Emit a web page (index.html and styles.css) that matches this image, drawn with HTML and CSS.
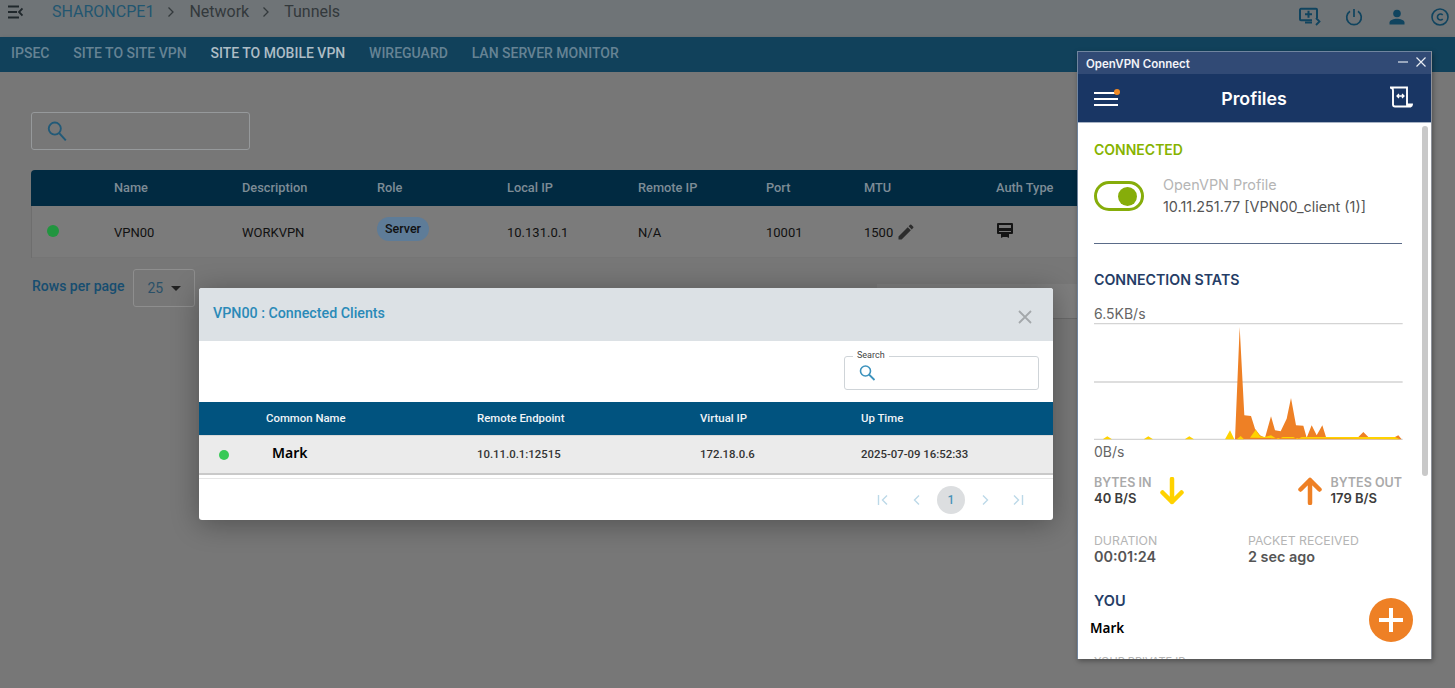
FILE: index.html
```html
<!DOCTYPE html>
<html lang="en">
<head>
<meta charset="utf-8">
<title>Tunnels</title>
<link rel="stylesheet" href="styles.css">
</head>
<body>
<div class="page">
  <header class="topbar">
    <svg class="menu-ic" width="15" height="14" viewBox="0 0 15 14"><path d="M0 1.500h11M0 7h9M0 12.500h11" stroke="#20282c" stroke-width="1.800" fill="none"/><path d="M14.500 3.500 11 7l3.500 3.500" stroke="#20282c" stroke-width="1.800" fill="none"/></svg>
    <nav class="crumbs">
      <span class="crumb-root">SHARONCPE1</span>
      <svg class="chev" width="8" height="12" viewBox="0 0 8 12"><path d="M1.500 1.500 6 6l-4.500 4.500" stroke="#33393c" stroke-width="1.300" fill="none"/></svg>
      <span>Network</span>
      <svg class="chev" width="8" height="12" viewBox="0 0 8 12"><path d="M1.500 1.500 6 6l-4.500 4.500" stroke="#33393c" stroke-width="1.300" fill="none"/></svg>
      <span>Tunnels</span>
    </nav>
    <div class="top-icons">
      <svg class="mon-ic" width="22" height="20" viewBox="0 0 22 20"><path d="M18 11V2.800a1 1 0 0 0-1-1H2a1 1 0 0 0-1 1v9.400a1 1 0 0 0 1 1h11" stroke="#10445f" stroke-width="2" fill="none"/><path d="M9.500 3.800v7M6 7.300h7M6 15.500h7" stroke="#10445f" stroke-width="2" fill="none"/><path d="m17 11 3.500 3.500L17 18" stroke="#10445f" stroke-width="1.800" fill="none"/></svg>
      <svg width="18" height="18" viewBox="0 0 18 18"><path d="M9 1v8" stroke="#10445f" stroke-width="1.700"/><path d="M5 3.300a7.300 7.300 0 1 0 8 0" stroke="#10445f" stroke-width="1.700" fill="none"/></svg>
      <svg width="16" height="16" viewBox="0 0 16 16"><circle cx="8" cy="4.500" r="3.800" fill="#10445f"/><path d="M0.500 15.500v-2c0-2.600 4.500-3.800 7.500-3.800s7.500 1.200 7.500 3.800v2z" fill="#10445f"/></svg>
      <svg width="18" height="18" viewBox="0 0 18 18"><circle cx="9" cy="9" r="8" stroke="#10445f" stroke-width="1.600" fill="none"/><path d="M11.700 7a3 3 0 1 0 0 4" stroke="#10445f" stroke-width="1.600" fill="none"/></svg>
    </div>
  </header>

  <nav class="tabs">
    <span class="tab">IPSEC</span>
    <span class="tab">SITE TO SITE VPN</span>
    <span class="tab tab-active">SITE TO MOBILE VPN</span>
    <span class="tab">WIREGUARD</span>
    <span class="tab">LAN SERVER MONITOR</span>
  </nav>

  <main class="content">
    <div class="search">
      <svg width="22" height="22" viewBox="0 0 20 20"><circle cx="8" cy="7.800" r="5.500" stroke="#225a78" stroke-width="1.700" fill="none"/><path d="m12 12 6 6.500" stroke="#225a78" stroke-width="1.800"/></svg>
    </div>

    <div class="table">
      <div class="thead">
        <span></span><span>Name</span><span>Description</span><span>Role</span><span>Local IP</span><span>Remote IP</span><span>Port</span><span>MTU</span><span>Auth Type</span>
      </div>
      <div class="trow">
        <span class="dot-cell"><i class="dot"></i></span>
        <span>VPN00</span>
        <span>WORKVPN</span>
        <span><b class="role">Server</b></span>
        <span>10.131.0.1</span>
        <span>N/A</span>
        <span>10001</span>
        <span class="mtu">1500
          <svg width="20" height="20" viewBox="0 0 24 24"><path fill="#2c2c2c" d="M3 17.250V21h3.750L17.810 9.940l-3.750-3.750L3 17.250zM20.710 7.040a1 1 0 0 0 0-1.410l-2.340-2.340a1 1 0 0 0-1.410 0l-1.830 1.830 3.750 3.750 1.830-1.830z"/></svg>
        </span>
        <span class="auth">
          <svg width="18" height="17" viewBox="0 0 18 17"><path d="M2 1h14a1 1 0 0 1 1 1v9a1 1 0 0 1-1 1h-3v4l-2-1h-4l-2 1v-4H2a1 1 0 0 1-1-1V2a1 1 0 0 1 1-1z" fill="#141414"/><path d="M3 3h12v3H3z" fill="#777"/><path d="M3 9h12v1H3z" fill="#777"/></svg>
        </span>
      </div>
    </div>

    <div class="rows">
      <span class="rows-label">Rows per page</span>
      <span class="rows-select">25 <i class="caret"></i></span>
    </div>
  </main>
</div>

<div class="ghost"></div>

<section class="modal">
  <div class="modal-head">
    <span class="modal-title">VPN00 : Connected Clients</span>
    <svg class="modal-x" width="14" height="14" viewBox="0 0 14 14"><path d="m1 1 12 12M13 1 1 13" stroke="#a4a8ab" stroke-width="1.800"/></svg>
  </div>
  <div class="modal-tools">
    <div class="m-search">
      <span class="m-search-label">Search</span>
      <svg width="18" height="18" viewBox="0 0 18 18"><circle cx="7.500" cy="7" r="5" stroke="#3d93bd" stroke-width="1.600" fill="none"/><path d="m11 10.500 5.500 5.500" stroke="#3d93bd" stroke-width="1.800"/></svg>
    </div>
  </div>
  <div class="m-thead">
    <span></span><span>Common Name</span><span>Remote Endpoint</span><span>Virtual IP</span><span>Up Time</span>
  </div>
  <div class="m-trow">
    <span class="dot-cell"><i class="m-dot"></i></span>
    <span class="m-name">Mark</span>
    <span>10.11.0.1:12515</span>
    <span>172.18.0.6</span>
    <span>2025-07-09 16:52:33</span>
  </div>
  <div class="m-pager">
    <svg width="12" height="12" viewBox="0 0 12 12"><path d="M1.500 1v10M10 1.500 5.500 6l4.500 4.500" stroke="#bcd9e8" stroke-width="1.400" fill="none"/></svg>
    <svg width="12" height="12" viewBox="0 0 12 12"><path d="M8 1.500 3.500 6 8 10.500" stroke="#bcd9e8" stroke-width="1.400" fill="none"/></svg>
    <span class="page-num">1</span>
    <svg width="12" height="12" viewBox="0 0 12 12"><path d="M4 1.500 8.500 6 4 10.500" stroke="#bcd9e8" stroke-width="1.400" fill="none"/></svg>
    <svg class="pager-last" width="12" height="12" viewBox="0 0 12 12"><path d="M10.500 1v10M2 1.500 6.500 6 2 10.500" stroke="#bcd9e8" stroke-width="1.400" fill="none"/></svg>
  </div>
</section>

<aside class="ovpn">
  <div class="ovpn-title">
    <span>OpenVPN Connect</span>
    <span class="win-btns">
      <svg width="10" height="10" viewBox="0 0 10 10"><path d="M0 5h10" stroke="#dfe4ec" stroke-width="1.200"/></svg>
      <svg width="10" height="10" viewBox="0 0 10 10"><path d="m.5.500 9 9M9.500.500l-9 9" stroke="#e8ecf2" stroke-width="1.200"/></svg>
    </span>
  </div>
  <div class="ovpn-head">
    <span class="burger">
      <svg width="27" height="17" viewBox="0 0 27 17"><path d="M0 4h22M0 10h24M0 16h24" stroke="#fff" stroke-width="2.200"/><circle cx="23" cy="3" r="3" fill="#f08a24"/></svg>
    </span>
    <span class="ovpn-h">Profiles</span>
    <svg class="scroll-ic" width="24" height="22" viewBox="0 0 24 22"><path d="M1 1.500h17v17a2 2 0 0 0 2 2H6a2 2 0 0 1-2-2V4.500a3 3 0 0 0-3-3zM18 18.500h5a2 2 0 0 1-1.500 2H20" stroke="#fff" stroke-width="1.900" fill="none"/><path d="M8 10h7M10 8l-2 2 2 2M13 8l2 2-2 2" stroke="#fff" stroke-width="1.300" fill="none"/></svg>
  </div>
  <div class="ovpn-body">
    <div class="scrollbar"></div>
    <h3 class="connected">CONNECTED</h3>
    <div class="profile">
      <span class="toggle"><i class="knob"></i></span>
      <div class="profile-text">
        <div class="profile-name">OpenVPN Profile</div>
        <div class="profile-ip">10.11.251.77 [VPN00_client (1)]</div>
      </div>
    </div>
    <hr class="rule">
    <h3 class="stats-h">CONNECTION STATS</h3>
    <div class="rate rate-top">6.5KB/s</div>
    <svg class="chart" width="309" height="118" viewBox="12 8 927 354" preserveAspectRatio="none">
      <path d="M12 10h926M12 185h926M12 357h926" stroke="#d4d4d4" stroke-width="4" fill="none"/>
      <path fill="#ee8025" d="M435 357 449 20 463 285 483 287 495 325 510 345 525 352 543 288 555 330 572 333 590 295 603 233 618 315 640 316 650 352 665 315 680 345 697 315 708 350 805 350 820 335 835 350 915 350 925 345 935 357z"/>
      <path fill="#ffd200" d="M38 357 52 348 66 357zM161 357 175 348 189 357zM284 357 298 348 312 357zM405 357 420 330 433 357zM440 357 452 347 462 357zM480 352 497 328 510 348 525 350 543 345 555 352 565 357 578 350 610 350 622 357 635 350 915 350 930 357z"/>
    </svg>
    <div class="rate rate-bot">0B/s</div>
    <div class="bytes">
      <div class="bytes-side bytes-in">
        <div><div class="lab-b">BYTES IN</div><div class="val-b">40 B/S</div></div>
        <svg width="24" height="28" viewBox="0 0 24 28"><path d="M12 2v23M2.500 15.500 12 25l9.500-9.500" stroke="#ffd200" stroke-width="4.500" stroke-linecap="round" stroke-linejoin="round" fill="none"/></svg>
      </div>
      <div class="bytes-side">
        <svg width="24" height="28" viewBox="0 0 24 28"><path d="M12 26V3M2.500 12.500 12 3l9.500 9.500" stroke="#ee8025" stroke-width="4.500" stroke-linecap="round" stroke-linejoin="round" fill="none"/></svg>
        <div><div class="lab-b">BYTES OUT</div><div class="val-b">179 B/S</div></div>
      </div>
    </div>
    <div class="meta">
      <div class="meta-a"><div class="lab">DURATION</div><div class="val">00:01:24</div></div>
      <div><div class="lab">PACKET RECEIVED</div><div class="val">2 sec ago</div></div>
    </div>
    <h3 class="you-h">YOU</h3>
    <div class="you-name">Mark</div>
    <div class="private">YOUR PRIVATE IP</div>
    <span class="fab"><svg width="26" height="26" viewBox="0 0 26 26"><path d="M13 1v24M1 13h24" stroke="#fff" stroke-width="4"/></svg></span>
  </div>
</aside>
</body>
</html>
```
FILE: styles.css
```css
* { box-sizing: border-box; }
html, body { margin: 0; height: 100%; overflow: hidden; }
body { background: #777; font-family: Roboto, "Liberation Sans", sans-serif; position: relative; }
.page { height: 688px; display: flex; flex-direction: column; }

.topbar { height: 37px; background: #6f7477; display: flex; align-items: flex-start; padding: 5px 0 0 8px; flex: none; }
.menu-ic { margin-right: 29px; }
.crumbs { display: flex; align-items: center; font-size: 16px; color: #33393c; height: 13px; line-height: 13px; }
.crumb-root { color: #225670; }
.chev { margin: 0 14px 0 13px; }
.top-icons { margin-left: auto; display: flex; align-items: center; gap: 26px; padding-right: 6px; height: 24px; }
.mon-ic { margin-right: -2px; }

.tabs { height: 35px; background: #11415b; display: flex; align-items: center; gap: 23.800px; padding: 0 0 3px 11px; font-size: 14px; font-weight: 500; color: #668394; flex: none; box-shadow: 0 2px 4px rgba(0,0,0,.25); }
.tab-active { color: #aebdc6; }

.content { flex: 1; padding: 40px 0 0 31px; background: #777; }
.search { width: 219px; height: 38px; border: 1px solid #96999b; border-radius: 3px; display: flex; align-items: center; padding-left: 14px; }

.table { width: 1393px; margin-top: 20px; }
.thead, .trow { display: grid; grid-template-columns: 83px 128px 135px 130px 131px 128px 98px 132px 1fr; align-items: center; }
.thead { height: 36px; background: #012a41; color: #7d8c96; font-size: 12.800px; font-weight: 500; border-radius: 4px 4px 0 0; padding-bottom: 2px; }
.trow { height: 52px; background: #7b7b7b; color: #111; font-size: 13px; box-shadow: inset 1px 0 0 #6e6e6e, inset 0 -1px 0 #757575; }
.dot-cell { display: flex; }
.dot { width: 12px; height: 12px; border-radius: 50%; background: #21953f; margin: -2px 0 0 16px; }
.role { display: inline-block; background: #5e7c98; font-weight: 500; font-size: 12.500px; color: #111; padding: 0 8px; line-height: 24px; border-radius: 12px; position: relative; top: -3px; }
.mtu { display: flex; align-items: center; gap: 3px; }
.auth { display: flex; margin-top: -4px; }

.rows { display: flex; align-items: center; gap: 9px; margin-top: 11px; padding-left: 1px; }
.rows-label { color: #164d70; font-size: 14px; font-weight: 500; margin-top: -5px; }
.rows-select { width: 62px; height: 38px; border: 1px solid #8e8e8e; border-radius: 3px; display: flex; align-items: center; padding-left: 13px; gap: 8px; font-size: 14px; color: #2a5068; }
.caret { width: 0; height: 0; border: 5px solid transparent; border-top-color: #222; border-bottom: 0; }

.ghost { position: absolute; left: 877px; top: 284px; width: 200px; height: 35px; background: #7d7d7d; border-bottom: 1px solid #696969; }

.modal { position: absolute; left: 199px; top: 288px; width: 854px; height: 232px; background: #fff; border-radius: 3px; overflow: hidden; box-shadow: 0 4px 28px rgba(0,0,0,.32); display: flex; flex-direction: column; }
.modal-head { height: 53px; background: #dce1e5; display: flex; align-items: center; justify-content: space-between; padding: 0 21px 0 14px; flex: none; }
.modal-title { color: #2a8ab8; font-size: 14.250px; font-weight: 500; margin-top: -3px; }
.modal-x { margin-top: 4px; }
.modal-tools { height: 61px; flex: none; display: flex; justify-content: flex-end; padding: 15px 14px 0 0; }
.m-search { width: 195px; height: 34px; border: 1px solid #cfd4d8; border-radius: 3px; display: flex; align-items: center; padding-left: 13px; position: relative; }
.m-search-label { position: absolute; left: 8px; top: -7px; padding: 0 4px; background: #fff; font-size: 9px; line-height: 11px; color: #444; }
.m-thead, .m-trow { display: grid; grid-template-columns: 67px 211px 223px 161px 1fr; align-items: center; flex: none; }
.m-thead { height: 33px; background: #01537f; color: #f0f4f7; font-size: 11.400px; font-weight: 500; padding-bottom: 2px; }
.m-trow { height: 40px; background: #ebebeb; border-top: 1px solid #d8d8d8; border-bottom: 2px solid #c9c9c9; color: #333; font-size: 11.400px; font-weight: 500; padding-bottom: 2px; }
.m-dot { width: 10px; height: 10px; border-radius: 50%; background: #38c956; margin: 2px 0 0 20px; }
.m-name { font-family: "Noto Sans", sans-serif; font-weight: 600; font-size: 14px; line-height: 18px; color: #000; padding-left: 6px; margin-top: -1px; }
.m-pager { flex: 1; margin-top: 3px; border-top: 1px solid #e6e6e6; display: flex; align-items: center; justify-content: flex-end; gap: 22px; padding-right: 29px; }
.pager-last { margin-left: -1px; }
.page-num { width: 28px; height: 28px; margin: 0 -8px; border-radius: 50%; background: #dcdee0; color: #4a93b8; font-size: 12px; font-weight: 500; display: flex; align-items: center; justify-content: center; }

.ovpn { position: absolute; left: 1077px; top: 51px; width: 355px; height: 608px; background: #fff; font-family: Inter, "Liberation Sans", sans-serif; box-shadow: 1px 2px 5px rgba(0,0,0,.35); display: flex; flex-direction: column; overflow: hidden; border: 1px solid #70859f; border-bottom: 0; border-right: 1px solid #8d9199; }
.ovpn-title { height: 22px; background: #314a75; color: #f2f4f8; font-size: 11.500px; font-weight: 600; display: flex; align-items: center; justify-content: space-between; padding: 1px 5px 0 8px; flex: none; }
.win-btns { display: flex; gap: 8px; margin-top: -3px; }
.ovpn-head { height: 49px; background: #193664; display: flex; align-items: center; justify-content: space-between; padding: 0 18px 0 16px; flex: none; border-bottom: 1px solid #a8b3c4; }
.burger { display: flex; margin-top: -1px; }
.ovpn-h { color: #fff; font-size: 17.800px; font-weight: 600; margin-left: -2px; }
.scroll-ic { margin-top: -3px; }
.ovpn-body { position: relative; flex: 1; padding: 0 29px 0 16px; overflow: hidden; }
.scrollbar { position: absolute; right: 3px; top: 3px; width: 6px; height: 350px; background: #c9c9c9; border-radius: 3px; }
.connected { margin: 18px 0 0; font-size: 14px; line-height: 17px; font-weight: 600; color: #86b300; }
.profile { display: flex; gap: 19px; margin-top: 23px; height: 44px; }
.toggle { width: 50px; height: 30px; border: 3.500px solid #86ad0a; border-radius: 15px; display: flex; align-items: center; justify-content: flex-end; padding-right: 4px; flex: none; }
.knob { width: 19px; height: 19px; background: #86ad0a; border-radius: 50%; }
.profile-text { font-size: 14.400px; line-height: 22px; margin-top: -7px; white-space: nowrap; }
.profile-name { color: #b5b5b5; }
.profile-ip { color: #555; }
.rule { border: 0; border-top: 1px solid #5a6b88; margin: 18px 0 0; }
.stats-h { margin: 27px 0 0; font-size: 14.200px; line-height: 17px; font-weight: 600; color: #253d66; }
.rate { font-size: 14px; line-height: 17px; color: #666; }
.rate-top { margin-top: 17px; }
.chart { display: block; margin-top: 1px; }
.rate-bot { margin-top: 2px; }
.bytes { display: flex; justify-content: space-between; margin-top: 16px; }
.bytes-side { display: flex; align-items: center; gap: 9px; }
.lab-b { font-size: 12.500px; line-height: 14px; font-weight: 600; color: #aaa; }
.val-b { font-size: 13px; line-height: 16px; font-weight: 600; color: #3c3c3c; }
.meta { display: flex; margin-top: 27px; }
.meta-a { width: 154px; }
.lab { font-size: 12.300px; line-height: 16px; color: #b5b5b5; }
.val { font-size: 14.400px; line-height: 15px; font-weight: 600; color: #555; }
.you-h { margin: 28px 0 0; font-size: 14.500px; line-height: 17px; font-weight: 600; color: #253d66; }
.you-name { margin: 10px 0 0 -4px; font-family: "Noto Sans", sans-serif; font-size: 13.500px; line-height: 18px; font-weight: 600; color: #000; }
.private { margin-top: 17px; font-size: 11px; line-height: 14px; color: #b5b5b5; }
.fab { position: absolute; right: 18px; bottom: 17px; width: 44px; height: 44px; background: #ee8025; border-radius: 50%; display: flex; align-items: center; justify-content: center; }
```
